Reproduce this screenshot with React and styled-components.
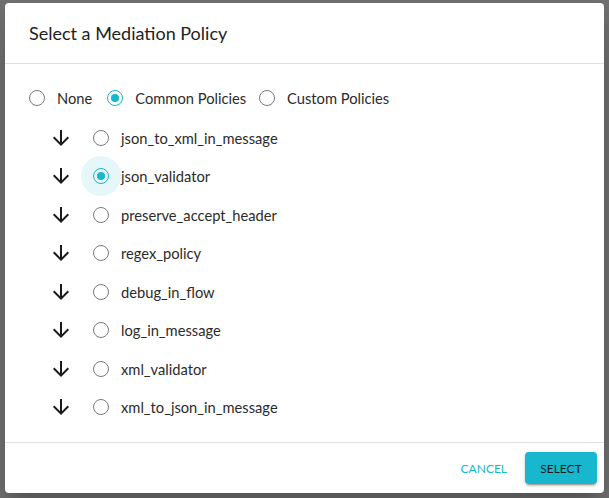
import React, { useState } from "react";
import styled, { createGlobalStyle } from "styled-components";

const Global = createGlobalStyle`
  html, body { margin: 0; padding: 0; }
  body {
    background: #707070;
    font-family: Lato, "Open Sans", sans-serif;
    width: 609px;
    height: 498px;
    overflow: hidden;
  }
`;

const Backdrop = styled.div`
  width: 609px;
  height: 498px;
  padding: 3px 5px 5px 5px;
  box-sizing: border-box;
  display: flex;
`;

const Dialog = styled.div`
  flex: 1;
  background: #fff;
  border-radius: 4px;
  box-shadow: 0 11px 15px -7px rgba(0,0,0,0.2), 0 24px 38px 3px rgba(0,0,0,0.14);
  display: flex;
  flex-direction: column;
  overflow: hidden;
`;

const Header = styled.div`
  height: 60px;
  padding: 0 24px;
  display: flex;
  align-items: center;
  border-bottom: 1px solid #e0e0e0;
`;

const Title = styled.h2`
  margin: 0;
  font-size: 18px;
  font-weight: 400;
  color: #222;
`;

const Body = styled.div`
  flex: 1;
  padding: 19px 24px 0 24px;
  display: flex;
  flex-direction: column;
`;

const TopGroup = styled.div`
  display: flex;
  align-items: center;
  height: 30px;
`;

const Label = styled.label`
  display: flex;
  align-items: center;
  gap: 12px;
  margin-right: ${(p) => p.$gap || 0}px;
  font-size: 14.7px;
  color: #2b2b2b;
  cursor: pointer;
`;

const RadioWrap = styled.span`
  position: relative;
  width: 16px;
  height: 16px;
  display: inline-flex;
  align-items: center;
  justify-content: center;
  flex: none;
`;

const Halo = styled.span`
  position: absolute;
  left: -12px;
  top: -12px;
  width: 40px;
  height: 40px;
  border-radius: 50%;
  background: #e6f7fa;
`;

const Circle = styled.span`
  position: relative;
  box-sizing: border-box;
  width: 16px;
  height: 16px;
  border-radius: 50%;
  border: 1.6px solid ${(p) => (p.$on ? "#17b7cd" : "#7a7a7a")};
  display: flex;
  align-items: center;
  justify-content: center;
  &::after {
    content: "";
    width: 8px;
    height: 8px;
    border-radius: 50%;
    background: #17b7cd;
    display: ${(p) => (p.$on ? "block" : "none")};
  }
`;

const List = styled.div`
  display: flex;
  flex-direction: column;
  padding-left: 20px;
  margin-top: 5.5px;
`;

const Row = styled.div`
  display: flex;
  align-items: center;
  height: 38.5px;
`;

const ArrowBox = styled.span`
  width: 24px;
  height: 24px;
  display: inline-flex;
  margin-right: 20px;
  color: #1a1a1a;
`;

const Footer = styled.div`
  height: 50px;
  border-top: 1px solid #e0e0e0;
  display: flex;
  align-items: center;
  justify-content: flex-end;
  padding-right: 7px;
  gap: 18px;
`;

const TextButton = styled.button`
  background: none;
  border: none;
  font-family: inherit;
  font-size: 12px;
  color: #17b7cd;
  padding: 0;
`;

const FilledButton = styled.button`
  background: #17b7cd;
  border: none;
  border-radius: 4px;
  width: 72px;
  height: 32px;
  font-family: inherit;
  font-size: 12px;
  color: #1d1d1d;
  box-shadow: 0 3px 1px -2px rgba(0,0,0,0.2), 0 2px 2px 0 rgba(0,0,0,0.14), 0 1px 5px 0 rgba(0,0,0,0.12);
`;

const Radio = ({ on, halo }) => (
  <RadioWrap>
    {halo && <Halo />}
    <Circle $on={on} />
  </RadioWrap>
);

const ArrowDown = () => (
  <ArrowBox>
    <svg width="24" height="24" viewBox="0 0 24 24" fill="currentColor">
      <path d="M20 12l-1.41-1.41L13 16.17V4h-2v12.17l-5.58-5.59L4 12l8 8 8-8z" />
    </svg>
  </ArrowBox>
);

const policies = [
  "json_to_xml_in_message",
  "json_validator",
  "preserve_accept_header",
  "regex_policy",
  "debug_in_flow",
  "log_in_message",
  "xml_validator",
  "xml_to_json_in_message",
];

export default function App() {
  const [sel] = useState("json_validator");
  return (
    <>
      <Global />
      <Backdrop>
        <Dialog>
          <Header>
            <Title>Select a Mediation Policy</Title>
          </Header>
          <Body>
            <TopGroup>
              <Label $gap={15}>
                <Radio />
                None
              </Label>
              <Label $gap={13}>
                <Radio on />
                Common Policies
              </Label>
              <Label>
                <Radio />
                Custom Policies
              </Label>
            </TopGroup>
            <List>
              {policies.map((p) => (
                <Row key={p}>
                  <ArrowDown />
                  <Label>
                    <Radio on={p === sel} halo={p === sel} />
                    {p}
                  </Label>
                </Row>
              ))}
            </List>
          </Body>
          <Footer>
            <TextButton>CANCEL</TextButton>
            <FilledButton>SELECT</FilledButton>
          </Footer>
        </Dialog>
      </Backdrop>
    </>
  );
}
